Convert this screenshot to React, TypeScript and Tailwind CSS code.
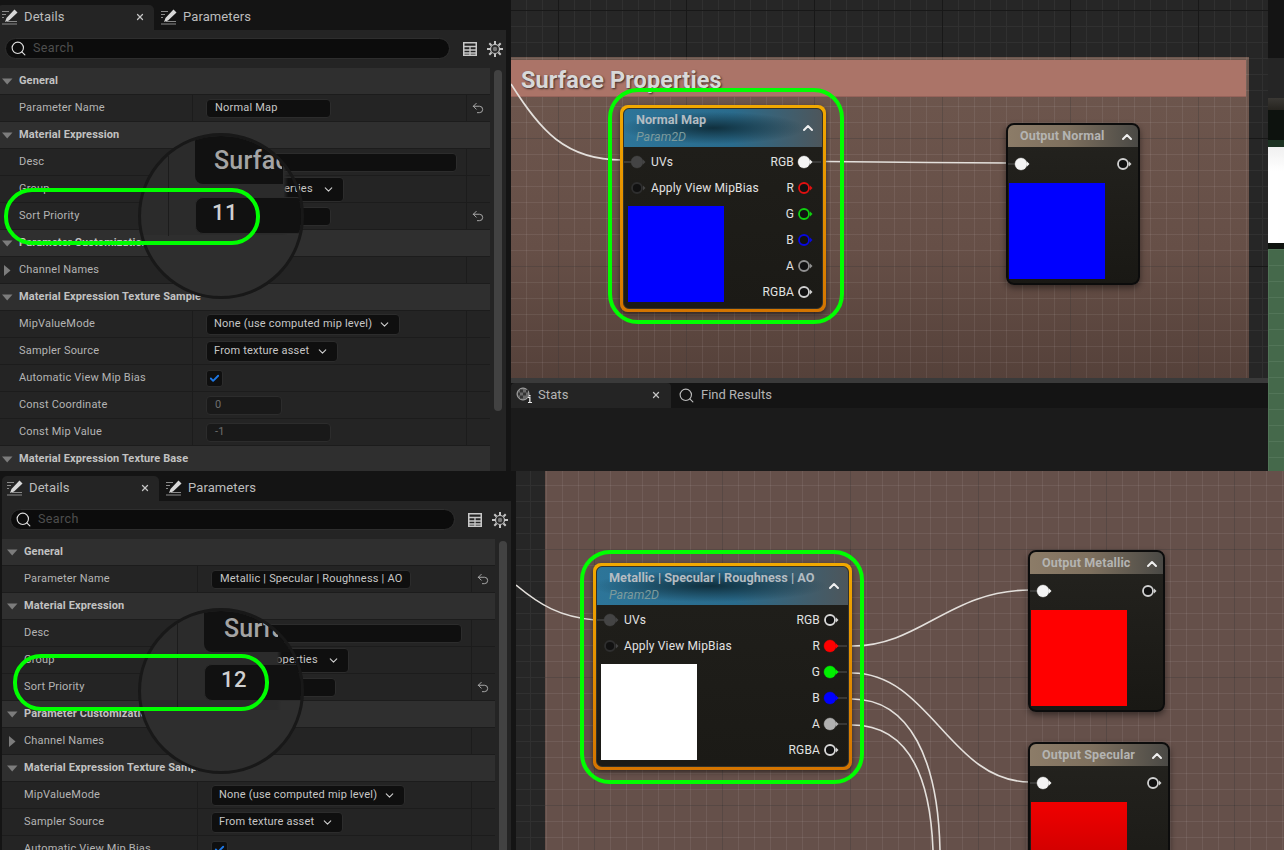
import React from "react";
import { ChevronDown, ChevronUp, Search, X, Undo2, Check } from "lucide-react";

function PencilIcon() {
  return (
    <svg width="16" height="16" viewBox="0 0 16 16" className="shrink-0">
      <path d="M0 2.5h7M0 5.5h4M0 8.5h2M5 12.5h10M0 15h15" stroke="#8a8a8a" strokeWidth="1" fill="none" />
      <path d="M12.5 0.5L15.5 3.5L7 11.5L3 13L4.5 9Z" fill="#d8d8d8" />
    </svg>
  );
}

function GearIcon() {
  return (
    <svg width="16" height="16" viewBox="0 0 16 16">
      <path d="M8 0v3M8 13v3M0 8h3M13 8h3M2.3 2.3l2.2 2.2M11.5 11.5l2.2 2.2M2.3 13.7l2.2-2.2M11.5 4.5l2.2-2.2" stroke="#c4c4c4" strokeWidth="2" />
      <circle cx="8" cy="8" r="4.5" fill="#2a2a2a" stroke="#c4c4c4" strokeWidth="1.2" />
      <circle cx="8" cy="8" r="2.2" fill="#777" />
    </svg>
  );
}

function TableIcon() {
  return (
    <svg width="14" height="14" viewBox="0 0 14 14">
      <rect x="0.75" y="0.75" width="12.5" height="12.5" fill="none" stroke="#c8c8c8" strokeWidth="1.5" />
      <path d="M0 4.5h14M0 8h14M0 11h14M7 4.5V14" stroke="#c8c8c8" strokeWidth="1.3" />
    </svg>
  );
}

function StatsIcon() {
  return (
    <svg width="16" height="16" viewBox="0 0 16 16" className="shrink-0">
      <circle cx="7" cy="7" r="6" fill="#6a6a6a" stroke="#aaa" strokeWidth="1" />
      <path d="M4 2.5h3v3H4zM7 5.5h3v3H7zM2 5.5h2v3H2zM4 8.5h3v3H4zM10 2.8h2v2.7h-2z" fill="#333" />
      <path d="M12 10h2.5v5H16v1h-4v-1h1.2v-4H12z" fill="#e8e8e8" />
      <rect x="13" y="8" width="1.6" height="1.4" fill="#e8e8e8" />
    </svg>
  );
}

function Tri({ open = true }: { open?: boolean }) {
  return (
    <svg width="11" height="11" viewBox="0 0 11 11" className="shrink-0">
      {open ? <path d="M0 2.5h10.5L5.2 8.5Z" fill="#7c7c7c" /> : <path d="M2 0v11L8.5 5.5Z" fill="#7c7c7c" />}
    </svg>
  );
}

function Header({ label }: { label: string }) {
  return (
    <div className="h-[27px] flex items-center gap-[6px] pl-[5px] bg-[#2f2f2f] border-b border-[#1c1c1c] box-border">
      <Tri />
      <span className="font-bold text-[#c2c2c2] whitespace-nowrap tracking-[0.12px]">{label}</span>
    </div>
  );
}

function Row({ label, children, reset, collapsed }: { label: string; children?: React.ReactNode; reset?: boolean; collapsed?: boolean }) {
  return (
    <div className="h-[27px] flex bg-[#242424] border-b border-[#1c1c1c] box-border">
      <div className="w-[196px] shrink-0 flex items-center gap-[6px] pl-[5px] border-r border-[#1c1c1c]">
        {collapsed ? <Tri open={false} /> : <span className="w-[11px]" />}
        <span className="text-[#b4b4b4] whitespace-nowrap">{label}</span>
      </div>
      <div className="flex-1 flex items-center pl-[13px]">{children}</div>
      <div className="w-[24px] shrink-0 border-l border-[#1c1c1c] flex items-center justify-center pr-[2px]">
        {reset && <Undo2 size={14} color="#b8b8b8" strokeWidth={1.5} />}
      </div>
    </div>
  );
}

function Field({ w, children, dim }: { w: string; children?: React.ReactNode; dim?: boolean }) {
  return (
    <div className={`${w} h-[19px] rounded-[4px] border border-[#2c2c2c] box-border pl-[8px] flex items-center whitespace-nowrap overflow-hidden ${dim ? "text-[#6e6e6e] bg-[#191919]" : "text-[#c6c6c6] bg-[#0f0f0f]"}`}>
      {children}
    </div>
  );
}

function Drop({ w, h, children }: { w: string; h: string; children: React.ReactNode }) {
  return (
    <div className={`${w} ${h} rounded-[4px] bg-[#0f0f0f] border border-[#2c2c2c] box-border pl-[7px] pr-[8px] flex items-center justify-between whitespace-nowrap text-[#c6c6c6]`}>
      <span>{children}</span>
      <ChevronDown size={13} color="#d0d0d0" strokeWidth={2} />
    </div>
  );
}

type PanelProps = {
  outer: string;
  paramName: string;
  paramW: string;
  circle: string;
  vline: string;
  surfBox: string;
  surfText: string;
  surf: string;
  numBox: string;
  numText: string;
  num: string;
  ring: string;
};

function DetailsPanel(p: PanelProps) {
  return (
    <div className={`${p.outer} w-[509px] shrink-0 relative`}>
      <div className="h-[30px] flex items-end">
        <div className="w-[157px] h-[25px] bg-[#242424] rounded-t-[5px] flex items-center pl-[5px] pr-[9px] pb-[2px] gap-[6px]">
          <PencilIcon />
          <span className="flex-1 text-[13px] text-[#bcbcbc] tracking-[0.1px]">Details</span>
          <X size={10} color="#c4c4c4" strokeWidth={3} />
        </div>
        <div className="h-[25px] flex items-center pl-[7px] pb-[2px] gap-[6px]">
          <PencilIcon />
          <span className="text-[13px] text-[#bcbcbc] tracking-[0.1px]">Parameters</span>
        </div>
      </div>
      <div className="bg-[#242424]">
        <div className="h-[38px] flex items-center pl-[8px] pb-[1px]">
          <div className="w-[445px] h-[21px] rounded-full bg-[#0c0c0c] border border-[#2e2e2e] box-border flex items-center pl-[4px] gap-[6px]">
            <Search size={17} color="#e0e0e0" strokeWidth={1.6} />
            <span className="text-[12.5px] text-[#4e4e4e] tracking-[0.4px]">Search</span>
          </div>
          <div className="ml-[13px]"><TableIcon /></div>
          <div className="ml-[10px]"><GearIcon /></div>
        </div>
        <div className="flex text-[11px] tracking-[0.2px]">
          <div className="w-[493px] shrink-0">
            <Header label="General" />
            <Row label="Parameter Name" reset>
              <Field w={p.paramW}>{p.paramName}</Field>
            </Row>
            <Header label="Material Expression" />
            <Row label="Desc">
              <Field w="w-[251px]" />
            </Row>
            <Row label="Group">
              <Drop w="w-[138px]" h="h-[25px]"><span className="pl-[4px]">Surface Properties</span></Drop>
            </Row>
            <Row label="Sort Priority" reset>
              <Field w="w-[125px]">{p.num}</Field>
            </Row>
            <Header label="Parameter Customization" />
            <Row label="Channel Names" collapsed />
            <Header label="Material Expression Texture Sample" />
            <Row label="MipValueMode">
              <Drop w="w-[194px]" h="h-[21px]">None (use computed mip level)</Drop>
            </Row>
            <Row label="Sampler Source">
              <Drop w="w-[132px]" h="h-[21px]">From texture asset</Drop>
            </Row>
            <Row label="Automatic View Mip Bias">
              <div className="w-[17px] h-[17px] rounded-[3px] bg-[#0f0f0f] border border-[#2c2c2c] flex items-center justify-center">
                <Check size={11} color="#1e78e6" strokeWidth={4} />
              </div>
            </Row>
            <Row label="Const Coordinate">
              <Field w="w-[76px]" dim>0</Field>
            </Row>
            <Row label="Const Mip Value">
              <Field w="w-[125px]" dim>-1</Field>
            </Row>
            <Header label="Material Expression Texture Base" />
          </div>
          <div className="flex-1 pl-[4px] pt-[2px]">
            <div className="w-[8px] h-[341px] rounded-full bg-[#424242]" />
          </div>
        </div>
      </div>

      <div className={`absolute ${p.circle} w-[166px] h-[166px] rounded-full border-[3px] border-[#181818] overflow-hidden box-border bg-no-repeat bg-[size:100%_62%,100%_38%] bg-[position:0_0,0_100%]`}>
        <div className={`absolute ${p.vline} top-0 h-[100px] w-[1px] bg-[#1c1c1c]`} />
        <div className={`absolute ${p.surfBox} w-[88px] bg-[#111111] rounded-bl-[8px] overflow-hidden`} />
        <div className={`absolute ${p.surfText} overflow-hidden whitespace-nowrap text-[25px] leading-none text-[#a4a4a4] font-medium tracking-[0.2px]`}>{p.surf}</div>
        <div className={`absolute ${p.numBox} w-[110px] h-[37px] bg-[#111111] border border-[#2a2a2a] rounded-[8px]`} />
        <div className={`absolute ${p.numText} text-[22px] leading-none text-[#d0d0d0] font-medium tracking-[0.5px]`}>{p.num}</div>
      </div>
      <div className={`absolute ${p.ring} w-[256px] h-[57px] rounded-[28px] border-[4px] border-[#00ff00] box-border`} />
    </div>
  );
}

function Pin({ color, filled, dim, stub }: { color: string; filled?: boolean; dim?: boolean; stub?: "l" | "r" }) {
  return (
    <svg width="18" height="14" viewBox="0 0 18 14" className="shrink-0 overflow-visible">
      {stub === "l" && <path d="M-8 7H2" stroke="#555" strokeWidth="1" />}
      {stub === "r" && <path d="M12 7H24" stroke="#555" strokeWidth="1" />}
      <circle cx="7" cy="7" r={filled ? 6 : 5} fill={filled ? color : "#111"} stroke={color} strokeWidth={filled ? 0.4 : 1.8} />
      <path d="M13 4.5L15.5 7L13 9.5Z" fill={dim ? "#444" : color} />
    </svg>
  );
}

type OutPin = { label: string; color: string; filled?: boolean; stub?: boolean };

function ParamNode({ cls, title, preview, pins }: { cls: string; title: string; preview: string; pins: OutPin[] }) {
  return (
    <div className={`absolute ${cls} h-[207px] rounded-[8px] p-[3px] bg-[linear-gradient(to_bottom,#f2a900,#d47400)] shadow-[0_2px_5px_rgba(0,0,0,0.5)] box-border`}>
      <div className="h-full rounded-[6px] border border-[#33322a] bg-[linear-gradient(to_bottom,#201f1b,#1b1a16)] overflow-hidden box-border">
        <div className="h-[38px] pl-[12px] pr-[6px] pb-[1px] flex items-center justify-between bg-[radial-gradient(ellipse_at_45%_50%,#10303e_0%,transparent_60%),linear-gradient(90deg,#2d7599,#2a6b8c_55%,#4d565b_100%)]">
          <div className="flex flex-col leading-[17px]">
            <span className="text-[12.7px] font-bold text-[#b4bcc2] whitespace-nowrap">{title}</span>
            <span className="text-[12.5px] italic text-[#7c9a9c]">Param2D</span>
          </div>
          <ChevronUp size={16} color="#f0f0f0" strokeWidth={3} />
        </div>
        <div className="flex justify-between mt-[2px] text-[12px] text-[#e2e2e2] tracking-[0.15px]">
          <div>
            <div className="h-[26px] flex items-center gap-[3px] pl-[6px]">
              <Pin color="#444444" filled dim stub="l" />
              <span>UVs</span>
            </div>
            <div className="h-[26px] flex items-center gap-[3px] pl-[6px]">
              <Pin color="#2e2e2e" dim />
              <span className="whitespace-nowrap">Apply View MipBias</span>
            </div>
            <div className={`mt-[5px] ml-[4px] w-[96px] h-[96px] ${preview}`} />
          </div>
          <div className="pr-[7px]">
            {pins.map((x) => (
              <div key={x.label} className="h-[26px] flex items-center justify-end gap-[3px]">
                <span>{x.label}</span>
                <Pin color={x.color} filled={x.filled} stub={x.stub ? "r" : undefined} />
              </div>
            ))}
          </div>
        </div>
      </div>
    </div>
  );
}

function OutputNode({ cls, title, preview }: { cls: string; title: string; preview: string }) {
  return (
    <div className={`absolute ${cls} rounded-[8px] border-[2px] border-[#0c0c0c] bg-[linear-gradient(to_bottom,#24231f,#191814)] shadow-[0_3px_6px_rgba(0,0,0,0.45)] overflow-hidden box-border`}>
      <div className="h-[22px] pl-[12px] pr-[3px] pt-[1px] flex items-center justify-between bg-[linear-gradient(90deg,#8c7c68,#7e705e_45%,#4a4945_100%)]">
        <span className="text-[12.5px] font-bold text-[#b4b4b2] tracking-[0.15px] whitespace-nowrap">{title}</span>
        <ChevronUp size={16} color="#f0f0f0" strokeWidth={3} />
      </div>
      <div className="h-[36px] flex items-center justify-between pl-[6px] pr-[4px] pb-[2px]">
        <Pin color="#f4f4f4" filled stub="l" />
        <Pin color="#d0d0d0" />
      </div>
      <div className={`ml-[1px] w-[96px] h-[96px] ${preview}`} />
    </div>
  );
}

export default function App() {
  return (
    <div className="w-[1284px] h-[850px] overflow-hidden flex flex-col bg-[#141414] font-['Roboto',sans-serif]">
      {/* Upper capture */}
      <div className="h-[471px] shrink-0 flex overflow-hidden">
        <div className="w-[511px] shrink-0 overflow-hidden">
          <DetailsPanel
            outer="-ml-[3px]"
            paramName="Normal Map"
            paramW="w-[125px]"
            circle="left-[141px] top-[133px] bg-[linear-gradient(to_right,#2b2b2b_89%,transparent_92%),linear-gradient(#2e2e2e,#2e2e2e)]"
            vline="left-[27px]"
            surfBox="left-[54px] -top-[10px] h-[58px]"
            surfText="left-[73px] top-[12px] w-[68px]"
            surf="Surface"
            numBox="left-[54px] top-[61px]"
            numText="left-[71px] top-[66px]"
            num="11"
            ring="left-[7px] top-[188px]"
          />
        </div>
        <div className="w-[757px] shrink-0 flex flex-col">
          <div className="relative h-[378px] shrink-0 overflow-hidden bg-[#262626] bg-[linear-gradient(to_right,#181818_1px,transparent_1px),linear-gradient(to_bottom,#181818_1px,transparent_1px),linear-gradient(to_right,#303030_1px,transparent_1px),linear-gradient(to_bottom,#303030_1px,transparent_1px)] bg-[size:128px_128px,128px_128px,16px_16px,16px_16px] bg-[position:47px_10px,47px_10px,15px_10px,15px_10px]">
            <div className="absolute left-0 top-[57px] w-[738px] h-[321px] bg-[linear-gradient(to_right,#00000038_1px,transparent_1px),linear-gradient(to_bottom,#00000038_1px,transparent_1px),linear-gradient(to_right,#ffffff12_1px,transparent_1px),linear-gradient(to_bottom,#ffffff12_1px,transparent_1px),linear-gradient(to_bottom,#6e574e,#664f47_60%,#55413a)] bg-[size:128px_128px,128px_128px,16px_16px,16px_16px,100%_100%] bg-[position:47px_81px,47px_81px,15px_1px,15px_1px,0_0] pt-[3px] pr-[3px]">
              <div className="h-[37px] bg-[#ab7468] border-b border-[#96635a] pl-[10px] pt-[5px] flex items-center">
                <span className="text-[23.5px] font-bold text-[#d8d8d8] tracking-[0.1px] [text-shadow:1px_1px_2px_#3a2a26] leading-none">Surface Properties</span>
              </div>
            </div>
            <svg className="absolute left-0 top-0" width="757" height="378" fill="none">
              <g transform="translate(-511 0)" stroke="#e4e0dc" strokeWidth="1.6">
                <path d="M511 84C540 130 565 160 622 160" />
                <path d="M826 161.5C880 162 950 163 1008 163" />
              </g>
            </svg>
            <ParamNode
              cls="left-[109px] top-[105px] w-[206px]"
              title="Normal Map"
              preview="bg-[#0000ff]"
              pins={[
                { label: "RGB", color: "#f4f4f4", filled: true, stub: true },
                { label: "R", color: "#e01010" },
                { label: "G", color: "#10d010" },
                { label: "B", color: "#0808e0" },
                { label: "A", color: "#909090" },
                { label: "RGBA", color: "#d0d0d0" },
              ]}
            />
            <div className="absolute left-[97px] top-[88px] w-[236px] h-[236px] rounded-[30px] border-[4px] border-[#00ff00] box-border" />
            <OutputNode cls="left-[495px] top-[123px] w-[134px] h-[162px]" title="Output Normal" preview="bg-[#0000ff]" />
          </div>
          <div className="flex-1 flex flex-col bg-[#1b1b1b] border-t-[5px] border-[#3a3a3a]">
            <div className="h-[25px] bg-[#141414] flex">
              <div className="w-[160px] bg-[#242424] rounded-t-[4px] flex items-center pl-[5px] pr-[10px] pb-[1px] gap-[6px]">
                <StatsIcon />
                <span className="flex-1 text-[13px] text-[#b4b4b4] tracking-[0.1px]">Stats</span>
                <X size={10} color="#c4c4c4" strokeWidth={3} />
              </div>
              <div className="flex items-center pl-[7px] pb-[1px] gap-[6px]">
                <Search size={17} color="#bcbcbc" strokeWidth={1.6} />
                <span className="text-[13px] text-[#b4b4b4]">Find Results</span>
              </div>
            </div>
          </div>
        </div>
        <div className="flex-1 flex flex-col">
          <div className="h-[58px] bg-[#141414]" />
          <div className="h-[40px] bg-[#252525]" />
          <div className="h-[12px] bg-[linear-gradient(to_bottom,#3a3834,#26241f)]" />
          <div className="h-[30px] bg-[#0d120e]" />
          <div className="h-[7px] bg-[#1c3222]" />
          <div className="h-[96px] bg-[linear-gradient(to_bottom,#f0f0f0,#ffffff_25%)]" />
          <div className="h-[6px] bg-[#101410]" />
          <div className="flex-1 bg-[#45694b] bg-[linear-gradient(to_right,#527558_1px,transparent_1px),linear-gradient(to_bottom,#527558_1px,transparent_1px)] bg-[size:16px_16px]" />
        </div>
      </div>

      {/* Lower capture */}
      <div className="h-[379px] shrink-0 flex overflow-hidden">
        <div className="w-[516px] shrink-0 overflow-hidden">
          <DetailsPanel
            outer="ml-[2px]"
            paramName="Metallic | Specular | Roughness | AO"
            paramW="w-[200px]"
            circle="left-[136px] top-[137px] bg-[linear-gradient(to_right,#2b2b2b_85%,transparent_88%),linear-gradient(#2e2e2e,#2e2e2e)]"
            vline="left-[36px]"
            surfBox="left-[63px] -top-[10px] h-[51px]"
            surfText="left-[83px] top-[5px] w-[54px]"
            surf="Surface"
            numBox="left-[63px] top-[53px]"
            numText="left-[80px] top-[58px]"
            num="12"
            ring="left-[11px] top-[183px]"
          />
        </div>
        <div className="relative flex-1 overflow-hidden flex bg-[#262626]">
          <div className="w-[29px] shrink-0 bg-[linear-gradient(to_right,#303030_1px,transparent_1px),linear-gradient(to_bottom,#303030_1px,transparent_1px)] bg-[size:16px_16px] bg-[position:14px_14px]" />
          <div className="flex-1 bg-[#65504a] bg-[linear-gradient(to_right,#00000038_1px,transparent_1px),linear-gradient(to_bottom,#00000038_1px,transparent_1px),linear-gradient(to_right,#ffffff12_1px,transparent_1px),linear-gradient(to_bottom,#ffffff12_1px,transparent_1px)] bg-[size:128px_128px,128px_128px,16px_16px,16px_16px] bg-[position:49px_78px,49px_78px,1px_14px,1px_14px]" />
          <svg className="absolute left-0 top-0" width="768" height="379" fill="none">
            <g transform="translate(-516 -471)" stroke="#e4e0dc" strokeWidth="1.6">
              <path d="M516 585C540 605 560 617 595 620" />
              <path d="M852 646C920 646 950 590 1030 590" />
              <path d="M852 673C930 673 950 782 1030 782" />
              <path d="M852 699C910 699 938 760 940 850" />
              <path d="M852 725C905 725 930 770 933 850" />
            </g>
          </svg>
          <ParamNode
            cls="left-[77px] top-[92px] w-[259px]"
            title="Metallic | Specular | Roughness | AO"
            preview="bg-white"
            pins={[
              { label: "RGB", color: "#d8d8d8" },
              { label: "R", color: "#ff0000", filled: true, stub: true },
              { label: "G", color: "#00f000", filled: true, stub: true },
              { label: "B", color: "#0000ff", filled: true, stub: true },
              { label: "A", color: "#b0b0b0", filled: true, stub: true },
              { label: "RGBA", color: "#d8d8d8" },
            ]}
          />
          <div className="absolute left-[64px] top-[79px] w-[284px] h-[234px] rounded-[30px] border-[4px] border-[#00ff00] box-border" />
          <OutputNode cls="left-[512px] top-[79px] w-[137px] h-[162px]" title="Output Metallic" preview="bg-[#ff0000]" />
          <OutputNode cls="left-[512px] top-[271px] w-[142px] h-[170px]" title="Output Specular" preview="bg-[linear-gradient(to_bottom,#f00000,#b80000)]" />
        </div>
      </div>
    </div>
  );
}
